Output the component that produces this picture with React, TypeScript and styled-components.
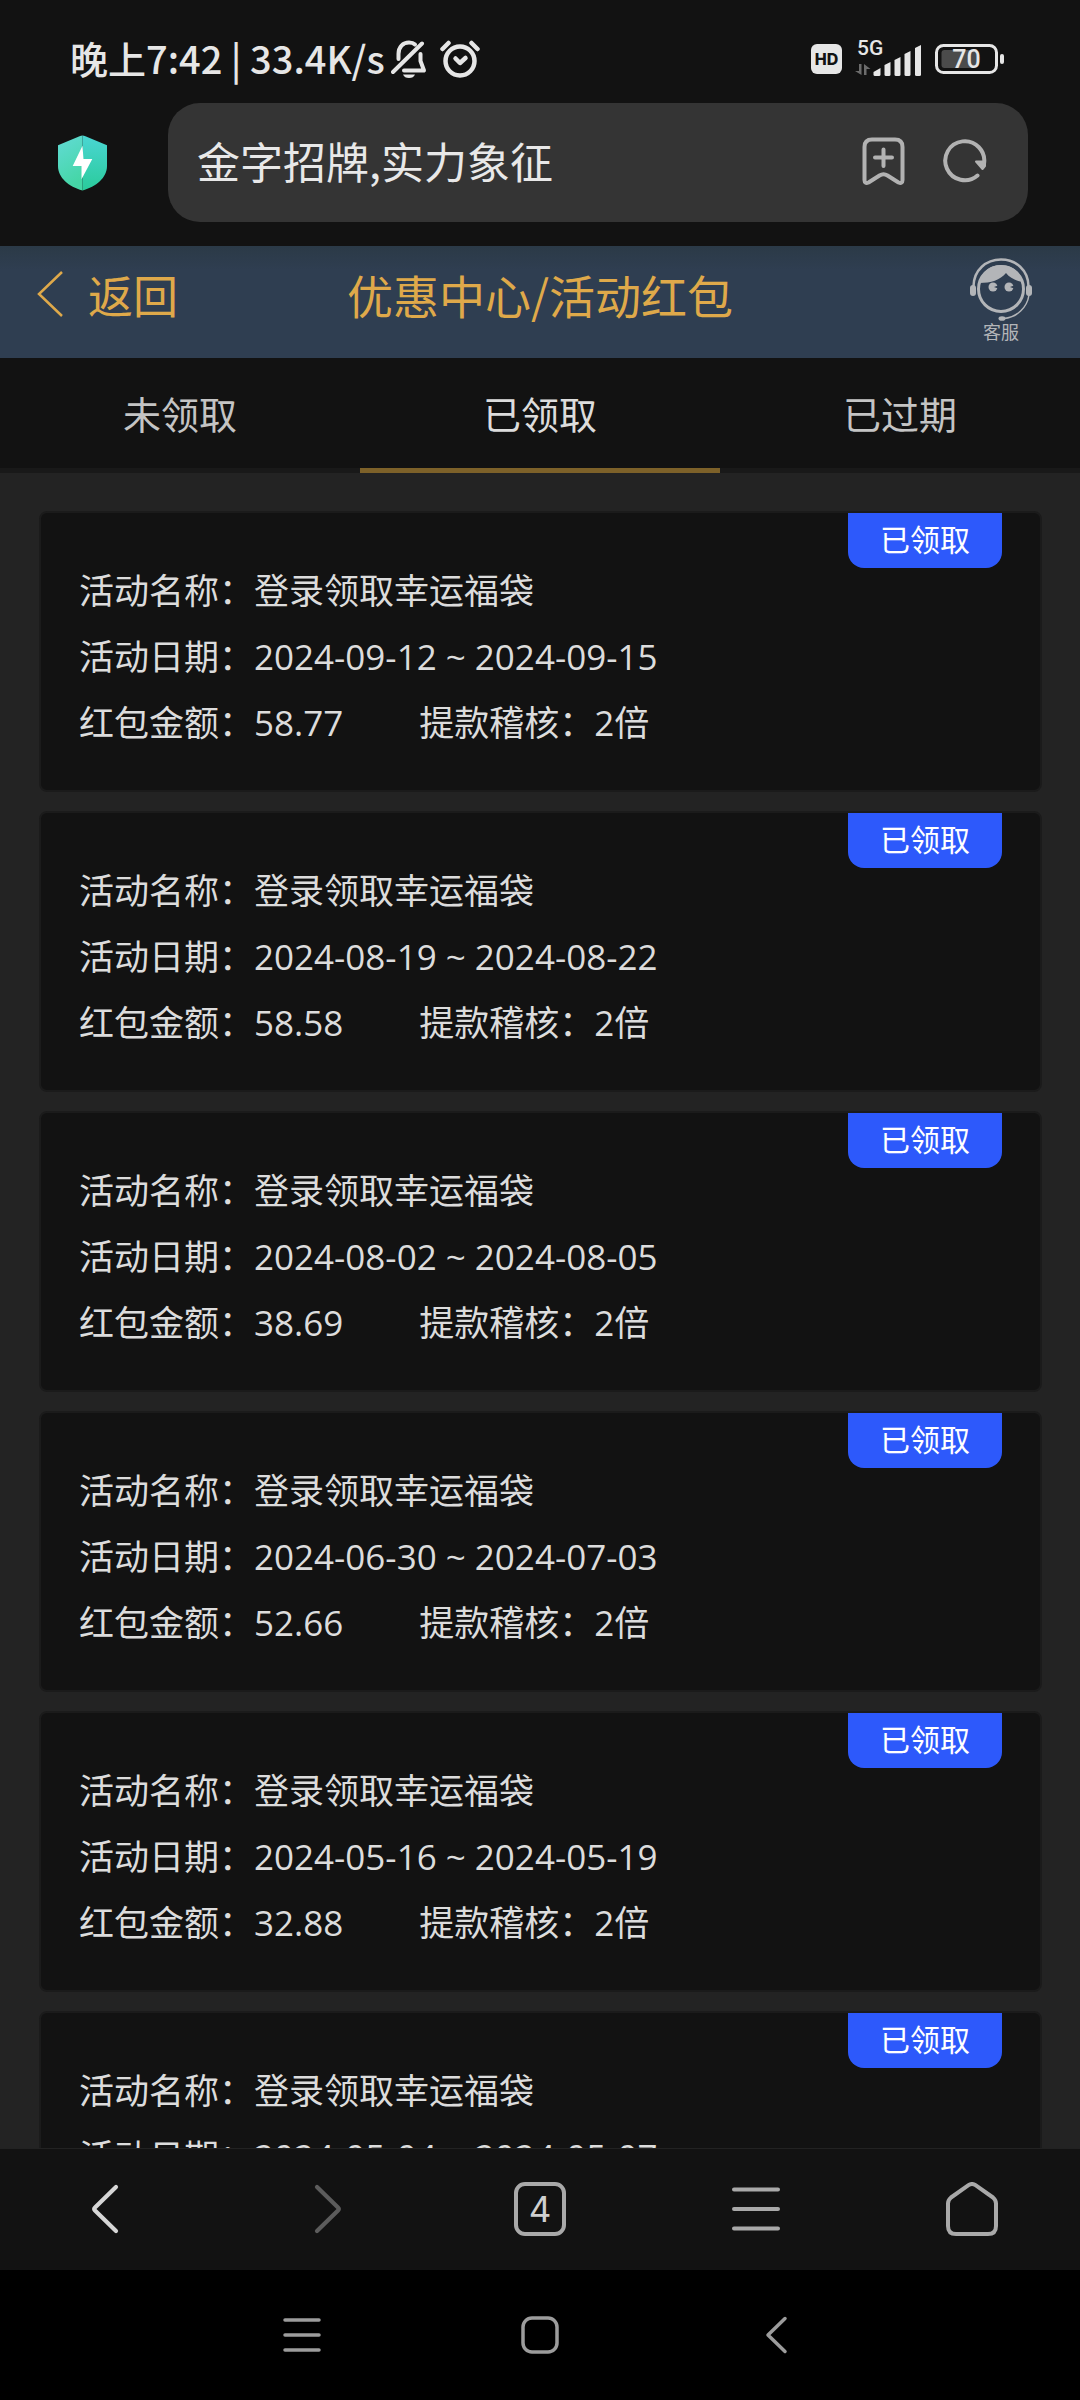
import React from 'react';
import styled, { createGlobalStyle } from 'styled-components';

const GlobalStyle = createGlobalStyle`
  *, *::before, *::after { box-sizing: border-box; }
  html, body, #root { height: 100%; }
  body {
    margin: 0;
    background: #121212;
    color: #dcdcdc;
    font-family: "Noto Sans CJK SC", sans-serif;
  }
  button, input { font-family: inherit; color: inherit; }
  button { margin: 0; padding: 0; border: 0; background: none; cursor: pointer; }
  svg { display: block; flex: none; }
`;

const Screen = styled.div`
  display: flex;
  flex-direction: column;
  height: 100vh;
  overflow: hidden;
`;

const StatusBar = styled.div`
  flex: none;
  display: flex;
  align-items: center;
  justify-content: space-between;
  height: 103px;
  padding: 14px 76px 0 70px;
  color: #e6e6e6;
`;

const StatusGroup = styled.div<{ $gap: number }>`
  display: flex;
  align-items: center;
  gap: ${(p) => p.$gap}px;
`;

const StatusText = styled.span`
  padding-bottom: 2px;
  font-size: 38px;
  line-height: 56px;
  font-weight: 500;
  white-space: pre;
`;

const AddressRow = styled.div`
  flex: none;
  display: flex;
  align-items: center;
  gap: 61px;
  padding: 0 52px 24px 58px;
`;

const AddressBar = styled.form`
  flex: 1;
  min-width: 0;
  display: flex;
  align-items: center;
  gap: 38px;
  height: 119px;
  padding: 0 41px 4px 29px;
  border-radius: 32px;
  background: #343434;
  color: #b2b2b2;
`;

const AddressInput = styled.input`
  flex: 1;
  min-width: 0;
  height: 68px;
  padding: 0 0 2px;
  border: 0;
  outline: 0;
  background: transparent;
  color: #e8e8e8;
  font-size: 43px;
`;

const PageHeader = styled.header`
  flex: none;
  display: grid;
  grid-template-columns: 1fr auto 1fr;
  align-items: start;
  height: 112px;
  padding: 0 36px;
  background: linear-gradient(#2b3a47, #2f3e51 24px);
  color: #dfa94a;
`;

const BackButton = styled.button`
  justify-self: start;
  display: flex;
  align-items: center;
  gap: 24px;
  height: 96px;
  font-size: 45px;
  && { color: #dfa94a; }
`;

const Title = styled.h1`
  margin: 0;
  font-size: 46px;
  font-weight: 400;
  line-height: 96px;
`;

const ServiceButton = styled.button`
  justify-self: end;
  display: flex;
  flex-direction: column;
  align-items: center;
  padding: 12px 12px 0 0;
  font-size: 18px;
  line-height: 20px;
  && { color: #b3b5b8; }
`;

const Tabs = styled.div`
  flex: none;
  display: grid;
  grid-template-columns: repeat(3, 1fr);
`;

const Tab = styled.button<{ $active: boolean }>`
  height: 115px;
  border-bottom: 5px solid ${(p) => (p.$active ? '#7d6129' : '#191919')};
  font-size: 38px;
  line-height: 56px;
  && { color: ${(p) => (p.$active ? '#dcdcdc' : '#c4c4c4')}; }
`;

const List = styled.main`
  flex: 1;
  min-height: 0;
  display: flex;
  flex-direction: column;
  gap: 19px;
  padding: 38px 38px 0 39px;
  overflow: hidden;
  background: #232323;
`;

const Card = styled.article`
  position: relative;
  flex: none;
  padding: 43px 38px 36px;
  border: 2px solid #1b1b1b;
  border-radius: 8px;
  background: #121212;
`;

const Badge = styled.span`
  position: absolute;
  top: 0;
  right: 38px;
  padding: 0 32px 5px;
  border-radius: 0 0 16px 16px;
  background: #2d59fb;
  color: #fff;
  font-size: 30px;
  line-height: 50px;
`;

const Fields = styled.dl`
  display: grid;
  margin: 0;
  font-size: 35px;
  line-height: 66px;
`;

const FieldRow = styled.div`
  display: flex;
  gap: 76px;
`;

const Field = styled.div`
  display: flex;
  align-items: baseline;
  height: 66px;
  white-space: nowrap;
`;

const Label = styled.dt``;

const Value = styled.dd`
  margin: 0;
  font-family: "Open Sans", "Noto Sans CJK SC", sans-serif;
`;

const Toolbar = styled.nav`
  flex: none;
  display: grid;
  grid-template-columns: repeat(5, 1fr);
  height: 122px;
  padding-bottom: 2px;
  border-top: 1px solid #222;
  background: #121212;
`;

const ToolButton = styled.button<{ $tone?: string }>`
  display: grid;
  place-items: center;
  && { color: ${(p) => p.$tone ?? '#a9a9a9'}; }
`;

const TabCount = styled.span`
  display: grid;
  place-items: center;
  width: 52px;
  height: 54px;
  border: 4px solid #a9a9a9;
  border-radius: 11px;
  color: #cfcfcf;
  font-family: Inter, sans-serif;
  font-size: 35px;
  line-height: 46px;
`;

const SystemNav = styled.nav`
  flex: none;
  display: flex;
  justify-content: center;
  height: 130px;
  background: #000;
`;

const SystemButton = styled.button`
  width: 22%;
  display: grid;
  place-items: center;
  && { color: #9c9c9c; }
`;

const BellOff = () => (
  <svg width="36" height="38" viewBox="0 0 36 38" fill="none" stroke="currentColor" strokeWidth="4" strokeLinecap="round" strokeLinejoin="round">
    <path d="M7.500 19V14C7.500 7 12 2.500 18 2.500C20.500 2.500 22.500 3 24 4.500" />
    <path d="M31 3.500L2 32" />
    <path d="M29.500 14V21L33 30.500H13" />
    <path d="M12 34.500H24C23 37 21 38 18 38S13 37 12 34.500Z" fill="currentColor" stroke="none" />
  </svg>
);

const Alarm = () => (
  <svg width="40" height="38" viewBox="0 0 40 38" fill="none" stroke="currentColor" strokeWidth="4.500" strokeLinecap="round" strokeLinejoin="round">
    <circle cx="20" cy="21" r="14.500" />
    <path d="M2.500 9L8.500 3M31.500 3L37.500 9" />
    <path d="M15.500 18.500L20 23L25.500 18" />
  </svg>
);

const HdIcon = () => (
  <svg width="31" height="30" viewBox="0 0 31 30">
    <rect width="31" height="30" rx="6" fill="currentColor" />
    <text x="15.500" y="21" textAnchor="middle" fontFamily="Inter, sans-serif" fontSize="16" fontWeight="800" fill="#121212">HD</text>
  </svg>
);

const Signal = () => (
  <svg width="67" height="38" viewBox="0 0 67 38" fill="currentColor" overflow="visible">
    <text x="2" y="15" fontFamily="Roboto, sans-serif" fontSize="21" fontWeight="500">5G</text>
    <path d="M4 35V24H6.500V35L0 31H4ZM9 35V24L15.500 29H11.500V35Z" fill="#6c6c6c" />
    <path d="M18.500 32L25.500 28V34.500Q25.500 36 24 36H20Q18.500 36 18.500 34.500Z" />
    <path d="M29.500 25L35.500 22V34.500Q35.500 36 34 36H31Q29.500 36 29.500 34.500Z" />
    <path d="M39.500 20L45.500 17V34.500Q45.500 36 44 36H41Q39.500 36 39.500 34.500Z" />
    <path d="M49.500 14L55.500 11V34.500Q55.500 36 54 36H51Q49.500 36 49.500 34.500Z" />
    <path d="M60 8L66 5V34.500Q66 36 64.500 36H61.500Q60 36 60 34.500Z" />
  </svg>
);

const Battery = () => (
  <svg width="69" height="30" viewBox="0 0 69 30" fill="none">
    <rect x="1.500" y="1.500" width="60" height="27" rx="7" stroke="currentColor" strokeWidth="3" />
    <rect x="6.500" y="6" width="35" height="18" rx="3" fill="#4b4b4b" />
    <rect x="65" y="10" width="4" height="10" rx="2" fill="currentColor" />
    <text x="31.500" y="24" textAnchor="middle" fontFamily="Roboto, sans-serif" fontSize="25" fontWeight="500" fill="currentColor">70</text>
  </svg>
);

const Shield = () => (
  <svg width="49" height="56" viewBox="0 0 50 56">
    <defs>
      <linearGradient id="shieldLeft" x1="0" y1="0" x2="0.300" y2="1">
        <stop offset="0" stopColor="#62dbd6" />
        <stop offset="1" stopColor="#45d6a6" />
      </linearGradient>
      <linearGradient id="shieldRight" x1="0" y1="0" x2="0" y2="1">
        <stop offset="0" stopColor="#4ad6d3" />
        <stop offset="1" stopColor="#2acb9b" />
      </linearGradient>
    </defs>
    <path d="M25 0Q23.500 0 22 .8L0 10V31C0 43 11 52 25 56Z" fill="url(#shieldLeft)" />
    <path d="M25 0Q26.500 0 28 .8L50 10V31C50 43 39 52 25 56Z" fill="url(#shieldRight)" />
    <path d="M25 10.500L15 31H24V44.500L35 24H26Z" fill="#fff" />
  </svg>
);

const BookmarkAdd = () => (
  <svg width="43" height="48" viewBox="0 0 43 48" fill="none" stroke="currentColor" strokeWidth="4" strokeLinecap="round" strokeLinejoin="round">
    <path d="M10 2.500H33Q40.500 2.500 40.500 10V43Q40.500 47 36.500 45.500L25.500 38.500Q21.500 36 17.500 38.500L6.500 45.500Q2.500 47 2.500 43V10Q2.500 2.500 10 2.500Z" />
    <path d="M21.500 12.500V29M13 20.500H30" />
  </svg>
);

const Refresh = () => (
  <svg width="44" height="44" viewBox="0 0 44 44" fill="none" stroke="currentColor" strokeWidth="4" strokeLinecap="round" strokeLinejoin="round">
    <path d="M34.500 36.500A19.500 19.500 0 1 1 41 25" />
    <path d="M33 22.500H42V27L39.500 30Z" fill="currentColor" strokeWidth="2" />
  </svg>
);

const ServiceFace = () => (
  <svg width="62" height="63" viewBox="0 0 62 63" fill="none" stroke="currentColor">
    <path d="M3.500 28C4 12 16 1.500 31 1.500S58 12 58.500 28" strokeWidth="2.500" />
    <rect x="0" y="27" width="6" height="11" rx="3" fill="currentColor" stroke="none" />
    <rect x="56" y="27" width="6" height="11" rx="3" fill="currentColor" stroke="none" />
    <circle cx="31" cy="31" r="22.500" strokeWidth="3" />
    <path d="M9.500 25C11 14 20 7 31 7S51 14 52.500 24C46 23 40 20 36 15C30 22 21 25 9.500 25Z" fill="currentColor" stroke="none" />
    <circle cx="23" cy="29" r="4.500" fill="currentColor" stroke="none" />
    <circle cx="39" cy="29" r="4.500" fill="currentColor" stroke="none" />
    <path d="M24 29L28 27.500V30.500ZM40 29L44 27.500V30.500Z" fill="#2f3e51" stroke="none" />
    <path d="M59 37C57 50 47 59 34 60.500" strokeWidth="1.500" />
    <ellipse cx="32" cy="60.500" rx="3.500" ry="2.300" fill="currentColor" stroke="none" />
  </svg>
);

const HeaderChevron = () => (
  <svg width="28" height="48" viewBox="0 0 28 48" fill="none" stroke="currentColor" strokeWidth="2.500">
    <path d="M26 2L3 24L26 46" />
  </svg>
);

const ToolChevron = ({ forward }: { forward?: boolean }) => (
  <svg width="54" height="54" viewBox="0 0 54 54" fill="none" stroke="currentColor" strokeWidth="4.200" strokeLinecap="round" strokeLinejoin="round">
    <path d={forward ? 'M20 5L41 25.500Q42.500 27 41 28.500L20 49' : 'M35 5L14 25.500Q12.500 27 14 28.500L35 49'} />
  </svg>
);

const Menu = () => (
  <svg width="48" height="44" viewBox="0 0 48 44" fill="none" stroke="currentColor" strokeWidth="4" strokeLinecap="round">
    <path d="M2 2.500H46M2 22H46M2 41.500H46" />
  </svg>
);

const Home = () => (
  <svg width="52" height="54" viewBox="0 0 52 54" fill="none" stroke="currentColor" strokeWidth="4" strokeLinejoin="round">
    <path d="M22.500 3.200Q26 .8 29.500 3.200L47 15.500Q50 18 50 21.500V44Q50 52 42 52H10Q2 52 2 44V21.500Q2 18 5 15.500Z" />
  </svg>
);

const SystemMenu = () => (
  <svg width="38" height="34" viewBox="0 0 38 34" fill="none" stroke="currentColor" strokeWidth="3.500" strokeLinecap="round">
    <path d="M2 2H36M2 17H36M2 32H36" />
  </svg>
);

const SystemHome = () => (
  <svg width="38" height="38" viewBox="0 0 38 38" fill="none" stroke="currentColor" strokeWidth="3.500">
    <rect x="2" y="2" width="34" height="34" rx="9" />
  </svg>
);

const SystemBack = () => (
  <svg width="26" height="38" viewBox="0 0 26 38" fill="none" stroke="currentColor" strokeWidth="3.500" strokeLinecap="round" strokeLinejoin="round">
    <path d="M20 2.500L3 19L20 35.500" />
  </svg>
);

interface Packet {
  dates: string;
  amount?: string;
}

const packets: Packet[] = [
  { dates: '2024-09-12 ~ 2024-09-15', amount: '58.77' },
  { dates: '2024-08-19 ~ 2024-08-22', amount: '58.58' },
  { dates: '2024-08-02 ~ 2024-08-05', amount: '38.69' },
  { dates: '2024-06-30 ~ 2024-07-03', amount: '52.66' },
  { dates: '2024-05-16 ~ 2024-05-19', amount: '32.88' },
  { dates: '2024-05-04 ~ 2024-05-07' },
];

const tabs = ['未领取', '已领取', '已过期'];

const Entry = ({ label, value }: { label: string; value: string }) => (
  <Field>
    <Label>{label}：</Label>
    <Value>{value}</Value>
  </Field>
);

export default function App() {
  const [active, setActive] = React.useState(1);
  return (
    <Screen>
      <GlobalStyle />
      <StatusBar>
        <StatusGroup $gap={13}>
          <StatusGroup $gap={6}>
            <StatusText>晚上7:42 | 33.4K/s</StatusText>
            <BellOff />
          </StatusGroup>
          <Alarm />
        </StatusGroup>
        <StatusGroup $gap={13}>
          <HdIcon />
          <Signal />
          <Battery />
        </StatusGroup>
      </StatusBar>
      <AddressRow>
        <Shield />
        <AddressBar onSubmit={(e) => e.preventDefault()}>
          <AddressInput aria-label="地址栏" defaultValue="金字招牌,实力象征" />
          <button type="button" aria-label="添加书签"><BookmarkAdd /></button>
          <button type="button" aria-label="刷新"><Refresh /></button>
        </AddressBar>
      </AddressRow>
      <PageHeader>
        <BackButton type="button"><HeaderChevron />返回</BackButton>
        <Title>优惠中心/活动红包</Title>
        <ServiceButton type="button"><ServiceFace />客服</ServiceButton>
      </PageHeader>
      <Tabs role="tablist">
        {tabs.map((name, i) => (
          <Tab key={name} type="button" role="tab" aria-selected={i === active} $active={i === active} onClick={() => setActive(i)}>
            {name}
          </Tab>
        ))}
      </Tabs>
      <List>
        {packets.map((p) => (
          <Card key={p.dates}>
            <Badge>已领取</Badge>
            <Fields>
              <Entry label="活动名称" value="登录领取幸运福袋" />
              <Entry label="活动日期" value={p.dates} />
              {p.amount && (
                <FieldRow>
                  <Entry label="红包金额" value={p.amount} />
                  <Entry label="提款稽核" value="2倍" />
                </FieldRow>
              )}
            </Fields>
          </Card>
        ))}
      </List>
      <Toolbar aria-label="浏览器工具栏">
        <ToolButton type="button" aria-label="后退" $tone="#d6d6d6"><ToolChevron /></ToolButton>
        <ToolButton type="button" aria-label="前进" $tone="#5c5c5c"><ToolChevron forward /></ToolButton>
        <ToolButton type="button" aria-label="标签页"><TabCount>4</TabCount></ToolButton>
        <ToolButton type="button" aria-label="菜单"><Menu /></ToolButton>
        <ToolButton type="button" aria-label="主页"><Home /></ToolButton>
      </Toolbar>
      <SystemNav aria-label="系统导航">
        <SystemButton type="button" aria-label="最近任务"><SystemMenu /></SystemButton>
        <SystemButton type="button" aria-label="桌面"><SystemHome /></SystemButton>
        <SystemButton type="button" aria-label="返回"><SystemBack /></SystemButton>
      </SystemNav>
    </Screen>
  );
}
